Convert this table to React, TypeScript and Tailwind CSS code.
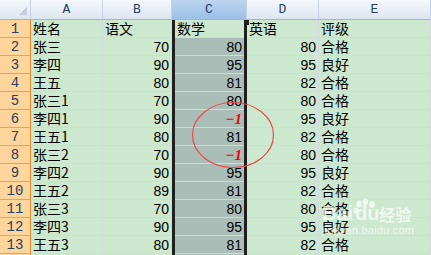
import type { ReactNode } from 'react';

type Cell = string | number;

const rows: Cell[][] = [
  ['姓名', '语文', '数学', '英语', '评级'],
  ['张三', 70, 80, 80, '合格'],
  ['李四', 90, 95, 95, '良好'],
  ['王五', 80, 81, 82, '合格'],
  ['张三1', 70, 80, 80, '合格'],
  ['李四1', 90, -1, 95, '良好'],
  ['王五1', 80, 81, 82, '合格'],
  ['张三2', 70, -1, 80, '合格'],
  ['李四2', 90, 95, 95, '良好'],
  ['王五2', 89, 81, 82, '合格'],
  ['张三3', 70, 80, 80, '合格'],
  ['李四3', 90, 95, 95, '良好'],
  ['王五3', 80, 81, 82, '合格'],
  ['', '', '', '', ''],
];

const cols = ['A', 'B', 'C', 'D', 'E'];

const cjk = "font-['Noto_Sans_CJK_SC',sans-serif]";
const num = "font-['Liberation_Sans','Noto_Sans_CJK_SC',sans-serif]";
const head = "font-['Liberation_Mono',monospace]";

function ColHead({ label, active }: { label: string; active?: boolean }) {
  return (
    <div
      className={`flex h-[20px] items-center justify-center border-r border-b border-r-[#c7d3e2] border-b-[#9eb6ce] text-[13px] leading-[16px] text-[#27415f] ${head} ${
        active
          ? 'bg-gradient-to-b from-[#bcd5f1] to-[#9cc0e7]'
          : 'bg-gradient-to-b from-[#f5f8fc] to-[#dce5f0]'
      }`}
    >
      {label}
    </div>
  );
}

function RowHead({ n }: { n: number }) {
  return (
    <div
      className={`flex h-[18px] items-center justify-center border-r border-b border-r-[#e48a2c] border-b-[#f2a04e] bg-[#ffd59b] pt-px text-[14px] leading-[16px] text-[#27415f] ${head}`}
    >
      {n}
    </div>
  );
}

function DataCell({ value, col, row }: { value: Cell; col: number; row: number }) {
  const selected = col === 2 && row > 0;
  const isNum = typeof value === 'number';
  let body: ReactNode = value;
  if (value === -1) {
    body = (
      <span className="font-['Liberation_Serif',serif] text-[15px] font-bold italic leading-[16px] text-[#ff0000]">
        −1
      </span>
    );
  }
  return (
    <div
      className={`flex h-[18px] items-end border-r border-b border-[#d3d7e6] text-black ${
        selected ? 'bg-[#abbdb7]' : 'bg-[#cce8cf]'
      } ${isNum ? `justify-end text-[14px] leading-[16px] ${num}` : `justify-start text-[14px] leading-[17px] ${cjk}`} ${
        col === 2 ? 'pl-[5px] pr-[4px]' : 'px-[2px]'
      }`}
    >
      {body}
    </div>
  );
}

function Watermark() {
  return (
    <div className="pointer-events-none absolute left-[322px] top-[201px] flex flex-col text-white/70">
      <div className="flex items-end">
        <span className="font-['Liberation_Sans',sans-serif] text-[20px] font-bold leading-[20px]">Bai</span>
        <div className="relative h-[22px] w-[24px]">
          <svg viewBox="0 0 24 26" className="absolute -top-[3px] left-0 h-[26px] w-[24px]" fill="currentColor">
            <ellipse cx="6" cy="6" rx="2.6" ry="3.4" />
            <ellipse cx="12.5" cy="3.8" rx="2.6" ry="3.4" />
            <ellipse cx="19" cy="6.5" rx="2.6" ry="3.4" />
            <ellipse cx="3" cy="12.5" rx="2.4" ry="3" />
          </svg>
          <span className="absolute bottom-0 left-[2px] font-['Liberation_Sans',sans-serif] text-[20px] font-bold leading-[20px]">
            du
          </span>
        </div>
        <span className={`ml-[2px] ${cjk} text-[16px] font-bold leading-[18px]`}>经验</span>
      </div>
      <span className="mt-[1px] font-['Liberation_Sans',sans-serif] text-[11px] leading-[12px] tracking-[0.2px]">
        jingyan.baidu.com
      </span>
    </div>
  );
}

export default function App() {
  return (
    <div className="relative h-[255px] w-[431px] overflow-hidden bg-[#cce8cf]">
      <div className="grid grid-cols-[31px_72px_69px_75px_72px_1fr]">
        {/* corner */}
        <div className="relative h-[20px] border-r border-b border-r-[#c7d3e2] border-b-[#9eb6ce] bg-gradient-to-b from-[#f5f8fc] to-[#dce5f0]">
          <svg viewBox="0 0 10 10" className="absolute left-[17px] top-[6px] h-[10px] w-[10px]">
            <polygon points="10,0 10,10 0,10" fill="#c3cede" />
            <polyline points="10,0 0,10 10,10" fill="none" stroke="#f4f7fb" strokeWidth="1" />
          </svg>
        </div>
        {cols.map((c) => (
          <ColHead key={c} label={c} active={c === 'C'} />
        ))}

        {rows.map((r, ri) => (
          <div key={ri} className="contents">
            <RowHead n={ri + 1} />
            {r.map((v, ci) => (
              <DataCell key={ci} value={v} col={ci} row={ri} />
            ))}
          </div>
        ))}
      </div>

      {/* column C selection */}
      <div className="pointer-events-none absolute left-[172px] top-[20px] h-[240px] w-[75px] border-x-[3px] border-[#221e1f]" />
      <div className="pointer-events-none absolute left-[244px] top-[20px] h-[5px] w-[5px] bg-[#221e1f]" />

      {/* marker ellipse */}
      <svg className="pointer-events-none absolute left-[190px] top-[100px] h-[70px] w-[86px]" viewBox="0 0 86 70">
        <ellipse cx="43" cy="35" rx="40.5" ry="32.5" fill="none" stroke="#ec4a4a" strokeWidth="1.2" />
      </svg>

      <Watermark />
    </div>
  );
}
